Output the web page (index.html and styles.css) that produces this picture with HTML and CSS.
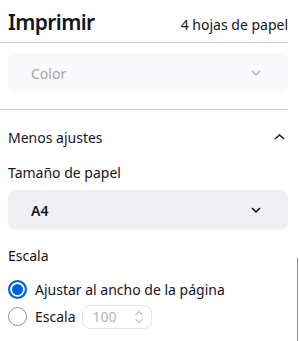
FILE: index.html
```html
<!DOCTYPE html>
<html lang="es">
<head>
<meta charset="utf-8">
<link rel="stylesheet" href="styles.css">
</head>
<body>
<div class="panel">
  <header class="header">
    <h1 class="title">Imprimir</h1>
    <span class="sheets">4 hojas de papel</span>
  </header>
  <div class="section">
    <div class="select disabled">
      <span>Color</span>
      <svg class="chev" width="10" height="6" viewBox="0 0 10 6"><path d="M1 1l4 4 4-4" fill="none" stroke="currentColor" stroke-width="1.2"/></svg>
    </div>
  </div>
  <div class="section more">
    <div class="toggle-row">
      <span>Menos ajustes</span>
      <svg class="chev-up" width="11" height="6" viewBox="0 0 11 6"><path d="M1 5l4.5-4 4.5 4" fill="none" stroke="currentColor" stroke-width="1.5"/></svg>
    </div>
    <div class="label">Tamaño de papel</div>
    <div class="select">
      <span class="strong">A4</span>
      <svg class="chev" width="10" height="6" viewBox="0 0 10 6"><path d="M1 1l4 4 4-4" fill="none" stroke="currentColor" stroke-width="1.6"/></svg>
    </div>
    <div class="label scale-label">Escala</div>
    <div class="radio-row">
      <span class="radio checked"></span>
      <span>Ajustar al ancho de la página</span>
    </div>
    <div class="radio-row">
      <span class="radio"></span>
      <span>Escala</span>
      <span class="number">
        <span>100</span>
        <svg width="10" height="14" viewBox="0 0 10 14"><path d="M1.5 5l3.5-3.5 3.5 3.5M1.5 9l3.5 3.5 3.5-3.5" fill="none" stroke="currentColor" stroke-width="1.1"/></svg>
      </span>
    </div>
  </div>
</div>
<div class="scrollthumb"></div>
</body>
</html>
```
FILE: styles.css
```css
html, body {
  margin: 0;
  padding: 0;
  background: #fff;
}
body {
  font-family: "Noto Sans", "Open Sans", sans-serif;
  color: #15141a;
  font-size: 14px;
  width: 299px;
  height: 341px;
  overflow: hidden;
  position: relative;
}
.panel {
  width: 288px;
}
.header {
  height: 43px;
  box-sizing: border-box;
  border-bottom: 1px solid #c9c8d2;
  display: flex;
  justify-content: space-between;
  align-items: baseline;
  padding: 7px 0 0 8px;
}
.title {
  margin: 0;
  font-size: 21px;
  font-weight: 600;
  letter-spacing: -0.6px;
  line-height: 30px;
}
.sheets {
  font-size: 14px;
}
.section {
  padding: 10px 0 16px 8px;
  border-bottom: 1px solid #c9c8d2;
}
.more {
  border-bottom: none;
  padding-top: 14px;
}
.select {
  height: 40px;
  border-radius: 8px;
  background: #f0f0f4;
  display: flex;
  align-items: center;
  justify-content: space-between;
  padding: 0 27px 0 23px;
}
.select.disabled {
  background: #f9f9fb;
  color: #a5a5ac;
}
.select.disabled .chev {
  color: #b0b0b6;
}
.strong {
  font-weight: 600;
}
.toggle-row {
  display: flex;
  justify-content: space-between;
  align-items: center;
  height: 26px;
  padding-right: 3px;
}
.label {
  height: 26px;
  line-height: 26px;
  margin: 10px 0 4px;
}
.scale-label {
  margin: 13px 0 7px;
}
.radio-row {
  display: flex;
  align-items: center;
  gap: 8px;
  height: 27px;
}
.radio {
  width: 19px;
  height: 19px;
  border-radius: 50%;
  border: 1px solid #8f8f9d;
  box-sizing: border-box;
  flex: none;
}
.radio.checked {
  border: 2px solid #0061e0;
  background: #0061e0;
  box-shadow: inset 0 0 0 2px #fff;
}
.number {
  display: flex;
  align-items: center;
  justify-content: space-between;
  width: 70px;
  height: 24px;
  box-sizing: border-box;
  border: 1px solid #e3e3e8;
  border-radius: 8px;
  padding: 0 7px 0 10px;
  color: #b5b5ba;
  margin-left: -2px;
}
.number svg {
  color: #c4c4ca;
}
.scrollthumb {
  position: absolute;
  left: 297px;
  top: 258px;
  width: 1px;
  height: 90px;
  background: #8f8f9d;
}
```
